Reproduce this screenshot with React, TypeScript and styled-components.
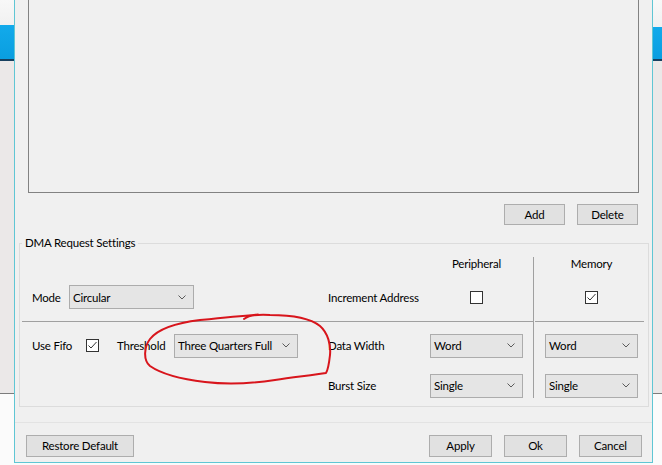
import React from 'react';
import styled, { createGlobalStyle } from 'styled-components';

const GlobalStyle = createGlobalStyle`
  html, body {
    margin: 0;
    padding: 0;
  }
  body {
    width: 662px;
    height: 465px;
    overflow: hidden;
    background: #fafafa;
    font-family: "Segoe UI", Lato, "Noto Sans", sans-serif;
    font-size: 11.5px;
    letter-spacing: -0.2px;
    color: #000;
  }
`;

const Screen = styled.div`
  position: relative;
  display: flex;
  align-items: flex-start;
  width: 662px;
  height: 465px;
  overflow: hidden;
  background: #fafafa;
`;

// bits of the window behind the dialog
const Backdrop = styled.div<{ $w: number; $band: number }>`
  flex: 0 0 ${(p) => p.$w}px;
  height: 465px;
  background: linear-gradient(
    to bottom,
    #f8f8f8 0,
    #f1f1f1 ${(p) => p.$band}px,
    #12aaeb ${(p) => p.$band}px,
    #0a9ee0 59px,
    #173f5f 59px,
    #173f5f 61px,
    #ebe8e8 61px,
    #ebe8e8 393px,
    #7c7c7c 393px,
    #7c7c7c 394px,
    #fbfbfb 394px
  );
`;

const Dialog = styled.div`
  flex: 0 0 639px;
  height: 463px;
  box-sizing: border-box;
  border: 1px solid #5fc6d4;
  border-top: none;
  background: #f0f0f0;
  display: flex;
  flex-direction: column;
`;

const ListBox = styled.div`
  margin: 0 13px;
  height: 193px;
  box-sizing: border-box;
  border: 1px solid #828282;
  border-top: none;
  background: #f0f0f0;
`;

const ButtonRow = styled.div<{ $top: number; $left: number; $right: number }>`
  display: flex;
  justify-content: flex-end;
  gap: 12px;
  margin-top: ${(p) => p.$top}px;
  padding: 0 ${(p) => p.$right}px 0 ${(p) => p.$left}px;
`;

const Button = styled.button<{ $w: number; $h: number }>`
  width: ${(p) => p.$w}px;
  height: ${(p) => p.$h}px;
  box-sizing: border-box;
  padding: 0;
  margin: 0;
  border: 1px solid #adadad;
  background: #e1e1e1;
  font-family: inherit;
  font-size: inherit;
  letter-spacing: inherit;
  color: #000;
  line-height: 1;
`;

const Spacer = styled.div`
  flex: 1;
`;

const Group = styled.fieldset`
  margin: 10px 3px 0 4px;
  padding: 0;
  min-width: 0;
  border: 1px solid #dcdcdc;
`;

const Legend = styled.legend`
  margin-left: 2px;
  padding: 0 3px;
  line-height: 16px;
`;

const Grid = styled.div`
  display: grid;
  grid-template-columns: 308px 102px 93px 10px 1px 11px 93px 10px;
  grid-template-rows: 6px 16px 48px 1px 47px 33px 4px;
  align-items: center;
`;

const Cell = styled.div<{ $col: string; $row: string; $center?: boolean }>`
  grid-column: ${(p) => p.$col};
  grid-row: ${(p) => p.$row};
  display: flex;
  align-items: center;
  justify-content: ${(p) => (p.$center ? 'center' : 'flex-start')};
  white-space: nowrap;
`;

const Heading = styled(Cell)`
  margin-bottom: 3px;
`;

const Field = styled(Cell)`
  padding-left: 12px;
`;

const Label = styled.span<{ $w?: number; $gap?: number }>`
  flex: 0 0 auto;
  width: ${(p) => (p.$w ? `${p.$w}px` : 'auto')};
  margin-left: ${(p) => p.$gap ?? 0}px;
  white-space: nowrap;
`;

const VRule = styled.div`
  grid-column: 5;
  grid-row: 2 / 7;
  align-self: stretch;
  margin-bottom: 4px;
  background: #a0a0a0;
`;

const HRule = styled.div<{ $col: string; $l: number; $r: number }>`
  grid-column: ${(p) => p.$col};
  grid-row: 4;
  height: 1px;
  margin: 0 ${(p) => p.$r}px 0 ${(p) => p.$l}px;
  background: #a0a0a0;
`;

const Combo = styled.div<{ $w: number }>`
  flex: 0 0 auto;
  width: ${(p) => p.$w}px;
  height: 24px;
  box-sizing: border-box;
  border: 1px solid #acacac;
  background: #e5e5e5;
  display: flex;
  align-items: center;
  justify-content: space-between;
  padding: 0 7px 0 3px;
  overflow: hidden;
`;

const Box = styled.div`
  flex: 0 0 auto;
  width: 13px;
  height: 13px;
  box-sizing: border-box;
  border: 1px solid #333;
  background: #fff;
  display: flex;
`;

const Footer = styled.div`
  margin-top: 15px;
  height: 1px;
  background: #e3e3e3;
`;

const Annotation = styled.svg`
  position: absolute;
  left: 0;
  top: 0;
  pointer-events: none;
`;

const Chevron = () => (
  <svg width="8" height="5" viewBox="0 0 8 5" style={{ flex: '0 0 auto' }}>
    <polyline points="0.5,0.5 4,4 7.5,0.5" fill="none" stroke="#5a5a5a" strokeWidth="1" />
  </svg>
);

const Select = ({ value, width }: { value: string; width: number }) => (
  <Combo $w={width}>
    <span>{value}</span>
    <Chevron />
  </Combo>
);

const Check = ({ checked }: { checked?: boolean }) => (
  <Box>
    {checked && (
      <svg width="11" height="11" viewBox="0 0 11 11">
        <polyline points="1.5,5.5 4,8 9.5,2" fill="none" stroke="#333" strokeWidth="1" />
      </svg>
    )}
  </Box>
);

const App: React.FC = () => {
  return (
    <Screen>
      <GlobalStyle />
      <Backdrop $w={14} $band={25} />
      <Dialog>
        <ListBox />
        <ButtonRow $top={11} $left={0} $right={14}>
          <Button $w={61} $h={21}>Add</Button>
          <Button $w={61} $h={21}>Delete</Button>
        </ButtonRow>

        <Group>
          <Legend>DMA Request Settings</Legend>
          <Grid>
            <Heading $col="3" $row="2" $center>Peripheral</Heading>
            <Heading $col="7" $row="2" $center>Memory</Heading>
            <VRule />

            <Field $col="1" $row="3">
              <Label $w={37}>Mode</Label>
              <Select value="Circular" width={125} />
            </Field>
            <Cell $col="2" $row="3">Increment Address</Cell>
            <Cell $col="3" $row="3" $center>
              <Check />
            </Cell>
            <Cell $col="7" $row="3" $center>
              <Check checked />
            </Cell>

            <HRule $col="1 / 5" $l={2} $r={0} />
            <HRule $col="6 / 9" $l={1} $r={4} />

            <Field $col="1" $row="5">
              <Label $w={54}>Use Fifo</Label>
              <Check checked />
              <Label $w={57} $gap={18}>Threshold</Label>
              <Select value="Three Quarters Full" width={124} />
            </Field>
            <Cell $col="2" $row="5">Data Width</Cell>
            <Cell $col="3" $row="5">
              <Select value="Word" width={93} />
            </Cell>
            <Cell $col="7" $row="5">
              <Select value="Word" width={93} />
            </Cell>

            <Cell $col="2" $row="6">Burst Size</Cell>
            <Cell $col="3" $row="6">
              <Select value="Single" width={93} />
            </Cell>
            <Cell $col="7" $row="6">
              <Select value="Single" width={93} />
            </Cell>
          </Grid>
        </Group>

        <Footer />
        <ButtonRow $top={12} $left={11} $right={10}>
          <Button $w={108} $h={22}>Restore Default</Button>
          <Spacer />
          <Button $w={63} $h={22}>Apply</Button>
          <Button $w={63} $h={22}>Ok</Button>
          <Button $w={63} $h={22}>Cancel</Button>
        </ButtonRow>
      </Dialog>
      <Backdrop $w={9} $band={27} />

      {/* hand-drawn red ring round the Threshold box */}
      <Annotation width="662" height="465" viewBox="0 0 662 465">
        <path
          d="M 244 319 C 248 316, 255 314, 270 315 C 290 315, 310 318, 320 326 C 328 333, 331 345, 330 355 C 329 364, 328 370, 326 373 C 315 375, 295 377, 275 380 C 255 383, 230 385, 205 382 C 180 379, 160 373, 150 366 C 143 360, 144 347, 150 339 C 158 329, 175 323, 200 320 C 220 318, 240 316, 258 314.5"
          fill="none"
          stroke="#d8151c"
          strokeWidth="2"
          strokeLinecap="round"
          strokeLinejoin="round"
        />
      </Annotation>
    </Screen>
  );
};

export default App;
